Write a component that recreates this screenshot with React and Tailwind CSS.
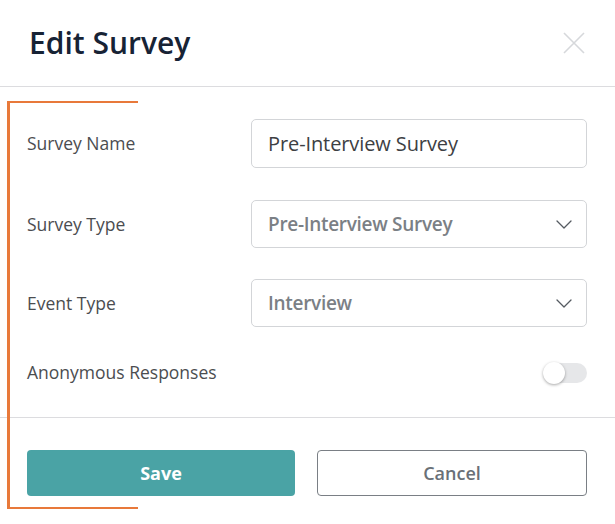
import { useState } from 'react';

const font = { fontFamily: '"Open Sans", "Liberation Sans", sans-serif' };

function Chevron() {
  return (
    <svg width="16" height="9" viewBox="0 0 16 9" fill="none">
      <path d="M1 1l7 7 7-7" stroke="#555b61" strokeWidth="1.3" strokeLinecap="round" strokeLinejoin="round" />
    </svg>
  );
}

function SelectBox({ value }) {
  return (
    <div className="w-[336px] h-[48px] border border-[#d3d5d8] rounded-[5px] flex items-center justify-between pl-4 pr-[14px]">
      <span className="text-[19px] text-[#7b8085] font-semibold tracking-[-0.3px]">{value}</span>
      <Chevron />
    </div>
  );
}

export default function App() {
  const [name, setName] = useState('Pre-Interview Survey');
  const [anon, setAnon] = useState(false);

  return (
    <div className="relative w-[615px] h-[524px] bg-white overflow-hidden" style={font}>
      {/* header */}
      <div className="h-[87px] border-b border-[#dcdcdf] flex items-center justify-between pl-[29px] pr-[30px]">
        <h2 className="text-[30px] font-semibold text-[#172335] tracking-[0px] pb-[1px]">Edit Survey</h2>
        <button className="text-[#d6d8db]">
          <svg width="22" height="22" viewBox="0 0 22 22" fill="none">
            <path d="M1 1l20 20M21 1L1 21" stroke="currentColor" strokeWidth="1.6" />
          </svg>
        </button>
      </div>

      {/* body */}
      <div className="pl-[27px] pr-[28px] pt-[32px] pb-[33px] border-b border-[#dcdcdf] flex flex-col">
        <div className="flex items-center justify-between h-[49px]">
          <label className="text-[17.5px] text-[#4b4d50]">Survey Name</label>
          <input
            value={name}
            onChange={(e) => setName(e.target.value)}
            className="w-[336px] h-[49px] border border-[#d3d5d8] rounded-[5px] px-4 text-[20px] text-[#3d4043] outline-none tracking-[-0.1px]"
          />
        </div>
        <div className="flex items-center justify-between mt-[32px]">
          <label className="text-[17.5px] text-[#4b4d50]">Survey Type</label>
          <SelectBox value="Pre-Interview Survey" />
        </div>
        <div className="flex items-center justify-between mt-[31px]">
          <label className="text-[17.5px] text-[#4b4d50]">Event Type</label>
          <SelectBox value="Interview" />
        </div>
        <div className="flex items-center justify-between mt-[35px] h-[22px]">
          <label className="text-[17.5px] text-[#4b4d50] leading-[22px] -mt-[2px]">Anonymous Responses</label>
          <button onClick={() => setAnon(!anon)} className="relative w-[44px] h-[22px] flex items-center">
            <span className={`absolute left-0 w-[44px] h-[20px] rounded-full ${anon ? 'bg-[#4aa3a5]' : 'bg-[#e6e7e9]'}`} />
            <span
              className={`absolute top-0 w-[22px] h-[22px] rounded-full bg-white shadow-[0_1px_3px_rgba(0,0,0,0.35)] ${anon ? 'right-0' : 'left-0'}`}
            />
          </button>
        </div>
      </div>

      {/* footer */}
      <div className="pl-[27px] pr-[28px] pt-[32px] flex gap-[22px]">
        <button className="flex-1 h-[46px] rounded-[4px] bg-[#4aa3a5] text-white text-[18px] font-bold">Save</button>
        <button className="flex-1 h-[46px] rounded-[4px] border border-[#7a7f85] text-[#6a7077] text-[18px] font-semibold">
          Cancel
        </button>
      </div>

      {/* annotation bracket */}
      <div className="absolute left-[7px] top-[101px] w-[131px] h-[408px] border-l-[3px] border-y-2 border-[#e8793a] pointer-events-none" />
    </div>
  );
}
